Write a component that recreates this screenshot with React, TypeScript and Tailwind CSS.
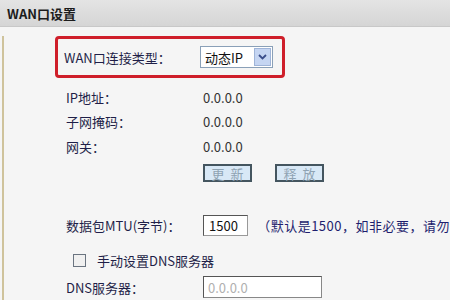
import React from "react";

const font = { fontFamily: '"Noto Sans CJK SC", "Liberation Sans", sans-serif' };

function Row({ label, children, h = "h-[24px]" }: { label: string; children?: React.ReactNode; h?: string }) {
  return (
    <div className={`flex items-center ${h}`}>
      <div className="w-[137px] shrink-0">{label}</div>
      {children}
    </div>
  );
}

export default function App() {
  return (
    <div className="w-[450px] h-[300px] overflow-hidden bg-[#f5f5f5] text-[13px] text-[#1f1f48] leading-none" style={font}>
      <div className="h-[27px] bg-gradient-to-b from-[#e4e4e4] to-[#d5d5d5] border-b border-[#c8c8c8] flex items-center pl-[7px] font-bold text-[13px] text-[#1c1c1c]">
        WAN口设置
      </div>
      <div className="ml-[2px] border-l-2 border-[#cfc39c] h-[273px]">
        <div className="ml-[51px] mt-[9px] w-[230px] h-[42px] border-[3px] border-[#cf1f2a] rounded-[4px] flex items-center pl-[6px]">
          <div className="w-[136px] shrink-0">WAN口连接类型：</div>
          <div className="h-[22px] w-[73px] bg-white border border-[#8aa0b8] flex items-center justify-between pl-[4px] pr-[1px]">
            <span className="text-[#111]">动态IP</span>
            <div className="w-[17px] h-[18px] bg-[#c5d5f2] border border-[#9fb4d8] flex items-center justify-center">
              <svg width="9" height="6" viewBox="0 0 9 6"><path d="M1 1 L4.5 4.5 L8 1" stroke="#3a4d8a" strokeWidth="1.8" fill="none" /></svg>
            </div>
          </div>
        </div>
        <div className="pl-[62px] mt-[7px]">
          <Row label="IP地址："><span className="text-[#333]">0.0.0.0</span></Row>
          <Row label="子网掩码："><span className="text-[#333]">0.0.0.0</span></Row>
          <Row label="网关：" h="h-[26px]"><span className="text-[#333]">0.0.0.0</span></Row>
          <div className="flex mt-[5px] pl-[137px] gap-[23px]">
            <div className="w-[49px] h-[18px] border-2 border-[#44555f] bg-[#d8e8f6] text-[#8fa3b3] flex items-center justify-center tracking-[6px] pl-[6px]">更新</div>
            <div className="w-[49px] h-[18px] border-2 border-[#44555f] bg-[#d8e8f6] text-[#8fa3b3] flex items-center justify-center tracking-[6px] pl-[6px]">释放</div>
          </div>
          <div className="mt-[32px]">
            <Row label="数据包MTU(字节)：" h="h-[22px]">
              <div className="h-[21px] w-[46px] bg-white border border-[#555] border-r-[#999] border-b-[#999] flex items-center pl-[5px] text-[#111]">1500</div>
              <span className="ml-[9px] text-[#1e1e6e] whitespace-nowrap tracking-[0.5px]">（默认是1500，如非必要，请勿</span>
            </Row>
          </div>
          <div className="flex items-center h-[24px] mt-[12px] pl-[7px]">
            <div className="w-[13px] h-[13px] border border-[#6a7480] bg-[#f0f0f0]" />
            <span className="ml-[11px]">手动设置DNS服务器</span>
          </div>
          <Row label="DNS服务器：" h="h-[30px]">
            <div className="h-[22px] w-[119px] bg-white border border-[#555] border-r-[#888] border-b-[#888] flex items-center pl-[4px] text-[#b0b0b0]">0.0.0.0</div>
          </Row>
        </div>
      </div>
    </div>
  );
}
